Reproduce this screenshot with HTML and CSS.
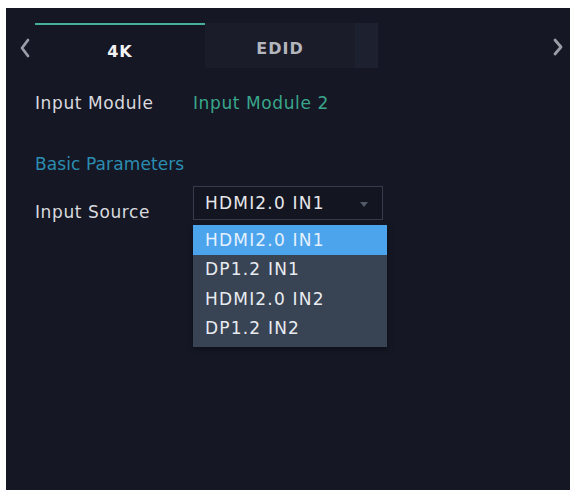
FILE: index.html
```html
<!DOCTYPE html>
<html lang="en">
<head>
<meta charset="utf-8">
<title>Input Module</title>
<link rel="stylesheet" href="styles.css">
</head>
<body>
<div class="panel">
  <div class="tabbar">
    <div class="nav nav-prev">
      <svg width="29" height="60" viewBox="0 0 29 60"><path d="M22 32 L16 40 L22 48" fill="none" stroke="#9a9ca6" stroke-width="2.8" stroke-linecap="round" stroke-linejoin="round"/></svg>
    </div>
    <div class="tab tab-active">4K</div>
    <div class="tab tab-idle">EDID</div>
    <div class="tab-edge"></div>
    <div class="spacer"></div>
    <div class="nav nav-next">
      <svg width="22" height="60" viewBox="0 0 22 60"><path d="M7 32 L13 39 L7 46" fill="none" stroke="#9a9ca6" stroke-width="2.8" stroke-linecap="round" stroke-linejoin="round"/></svg>
    </div>
  </div>

  <div class="content">
    <div class="row row-module">
      <span class="label">Input Module</span>
      <span class="value">Input Module 2</span>
    </div>
    <div class="section-title">Basic Parameters</div>
    <div class="row row-source">
      <span class="label label-low">Input Source</span>
      <div class="select">
        <span class="select-text">HDMI2.0 IN1</span>
        <span class="select-arrow"></span>
        <ul class="menu">
          <li class="option option-active">HDMI2.0 IN1</li>
          <li class="option">DP1.2 IN1</li>
          <li class="option">HDMI2.0 IN2</li>
          <li class="option">DP1.2 IN2</li>
        </ul>
      </div>
    </div>
  </div>
</div>
</body>
</html>
```

FILE: styles.css
```css
html, body {
  margin: 0;
  padding: 0;
  background: #ffffff;
}

body {
  font-family: "DejaVu Sans", Verdana, sans-serif;
  overflow: hidden;
}

.panel {
  margin: 8px 3px 0 6px;
  height: 482px;
  background: #151724;
  overflow: hidden;
}

/* tab strip */
.tabbar {
  display: flex;
  height: 60px;
}

.nav {
  flex: none;
}

.nav-prev {
  width: 29px;
}

.nav-next {
  width: 22px;
}

.spacer {
  flex: 1;
}

.tab {
  flex: none;
  box-sizing: border-box;
  text-align: center;
  font-weight: bold;
  font-size: 16px;
  letter-spacing: 1px;
  line-height: 16px;
  margin-top: 15px;
  padding-top: 18px;
}

.tab-active {
  width: 170px;
  color: #f2f2f4;
  border-top: 2px solid #46b29c;
  padding-top: 19px;
}

.tab-idle {
  width: 150px;
  background: #1a1c2a;
  color: #b4b6be;
}

.tab-edge {
  flex: none;
  width: 23px;
  margin-top: 15px;
  background: #1d202e;
}

/* settings rows */
.content {
  padding-left: 29px;
}

.row {
  display: flex;
  align-items: center;
}

.label {
  width: 158px;
  flex: none;
  color: #d9dadf;
  font-size: 17px;
  letter-spacing: 0.6px;
  line-height: 24px;
}

.label-low {
  padding-top: 14px;
}

.row-module {
  margin-top: 23px;
}

.value {
  color: #3aa68b;
  font-size: 17px;
  letter-spacing: 0.6px;
  line-height: 24px;
}

.section-title {
  margin-top: 37px;
  color: #2b8db0;
  font-size: 17px;
  letter-spacing: 0.1px;
  line-height: 24px;
}

.row-source {
  margin-top: 10px;
  align-items: flex-start;
}

/* dropdown */
.select {
  position: relative;
  box-sizing: border-box;
  width: 190px;
  height: 34px;
  border: 1px solid #363b4b;
  background: #131521;
  display: flex;
  align-items: center;
  padding-left: 11px;
}

.select-text {
  color: #e6e7ea;
  font-size: 17px;
  letter-spacing: 1.2px;
  flex: 1;
}

.select-arrow {
  width: 0;
  height: 0;
  margin-right: 14px;
  margin-top: 2px;
  border-left: 4px solid transparent;
  border-right: 4px solid transparent;
  border-top: 5px solid #555a68;
}

.menu {
  position: absolute;
  left: -1px;
  top: 38px;
  width: 194px;
  margin: 0;
  padding: 0 0 3px 0;
  list-style: none;
  background: #384354;
  box-shadow: 0 2px 6px rgba(0, 0, 0, 0.4);
}

.option {
  height: 29.5px;
  line-height: 29.5px;
  padding-left: 12px;
  color: #e8ecf0;
  font-size: 17px;
  letter-spacing: 1.2px;
}

.option-active {
  height: 30px;
  line-height: 30px;
  background: #4ba4ec;
  color: #e4f1ff;
}
```
